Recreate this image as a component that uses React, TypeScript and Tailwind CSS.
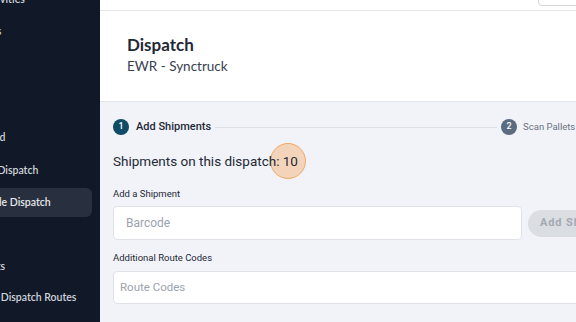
const navItems = [
  { label: "My Activities", gap: 0, indent: 0 },
  { label: "Trailers", gap: 12, indent: 4 },
  { label: "Planned", gap: 86, indent: 4 },
  { label: "Create Dispatch", gap: 13, indent: 0 },
  { label: "Schedule Dispatch", gap: 7, indent: 1, active: true },
  { label: "Reports", gap: 40, indent: 5 },
  { label: "Manage Dispatch Routes", gap: 11, indent: -3 },
];

export default function App() {
  return (
    <div className="flex h-[322px] w-[576px] overflow-hidden bg-[#f1f3f8] font-['Roboto',sans-serif]">
      {/* sidebar, scrolled so the start of each label is hidden */}
      <aside className="w-[100px] shrink-0 overflow-hidden bg-[#111827] font-['Lato',sans-serif]">
        <div className="-mt-[10px] -ml-[50px] w-[142px]">
          {navItems.map((item) => (
            <div
              key={item.label}
              style={{ marginTop: item.gap, paddingLeft: 14 + item.indent }}
              className={
                item.active
                  ? "flex h-[29px] items-center rounded-md bg-[#283040] text-[10.5px] font-semibold whitespace-nowrap text-[#e5e7eb]"
                  : "flex h-[20px] items-center text-[10.5px] font-semibold whitespace-nowrap text-[#cfd4dc]"
              }
            >
              {item.label}
            </div>
          ))}
        </div>
      </aside>

      <main className="flex min-w-0 flex-1 flex-col">
        {/* top bar */}
        <div className="relative h-[11px] shrink-0 border-b border-[#e5e7eb] bg-white">
          <div className="absolute -top-[10px] left-[438px] h-[16px] w-[60px] rounded border border-[#d1d5db] bg-white" />
        </div>

        {/* page header */}
        <div className="h-[91px] shrink-0 border-b border-[#e2e5ea] bg-white pl-[27px] pt-[24px]">
          <h1 className="font-['Lato',sans-serif] text-[17px] leading-[20px] font-bold text-[#1f2937]">
            Dispatch
          </h1>
          <p className="mt-[2px] font-['Lato',sans-serif] text-[13.5px] leading-[18px] text-[#374151]">
            EWR - Synctruck
          </p>
        </div>

        {/* content */}
        <div className="flex-1 pl-[13px]">
          {/* stepper */}
          <div className="mt-[17px] flex h-[16px] items-center">
            <span className="flex h-[16px] w-[16px] shrink-0 items-center justify-center rounded-full bg-[#0f4c65] text-[9px] font-medium text-white">
              1
            </span>
            <span className="ml-[7px] whitespace-nowrap text-[11px] font-medium text-[#1f2937]">
              Add Shipments
            </span>
            <span className="mx-[4px] h-px w-[282px] shrink-0 bg-[#dde1e7]" />
            <span className="flex h-[16px] w-[16px] shrink-0 items-center justify-center rounded-full bg-[#5b6b80] text-[9px] font-medium text-white">
              2
            </span>
            <span className="ml-[6px] whitespace-nowrap text-[9.5px] text-[#6b7280]">
              Scan Pallets
            </span>
          </div>

          {/* count */}
          <div className="relative mt-[16px] h-[20px] text-[13.5px] leading-[20px] text-[#1f2937]">
            <span className="absolute left-[157px] top-[-8px] h-[36px] w-[36px] rounded-full border border-[#f0a868] bg-[#f8a45e]/40" />
            <span className="relative">Shipments on this dispatch: 10</span>
          </div>

          {/* barcode */}
          <label className="mt-[17px] block text-[9.5px] leading-[12px] text-[#1f2937]">
            Add a Shipment
          </label>
          <div className="mt-[6px] flex items-center gap-[6px]">
            <div className="flex h-[34px] w-[409px] shrink-0 items-center rounded border border-[#dfe3e8] bg-white pl-[12px] text-[12px] text-[#9ca3af]">
              Barcode
            </div>
            <div className="flex h-[27px] w-[80px] shrink-0 items-center rounded-full bg-[#dadde2] pl-[12px] text-[11px] font-bold tracking-[0.08em] whitespace-nowrap text-[#a3a9b2]">
              Add Shipment
            </div>
          </div>

          {/* route codes */}
          <label className="mt-[12px] block text-[9.5px] leading-[12px] text-[#1f2937]">
            Additional Route Codes
          </label>
          <div className="mt-[7px] flex h-[33px] w-[480px] items-center rounded border border-[#dfe3e8] bg-white pl-[6px] text-[11.5px] text-[#9ca3af]">
            Route Codes
          </div>
        </div>
      </main>
    </div>
  );
}
